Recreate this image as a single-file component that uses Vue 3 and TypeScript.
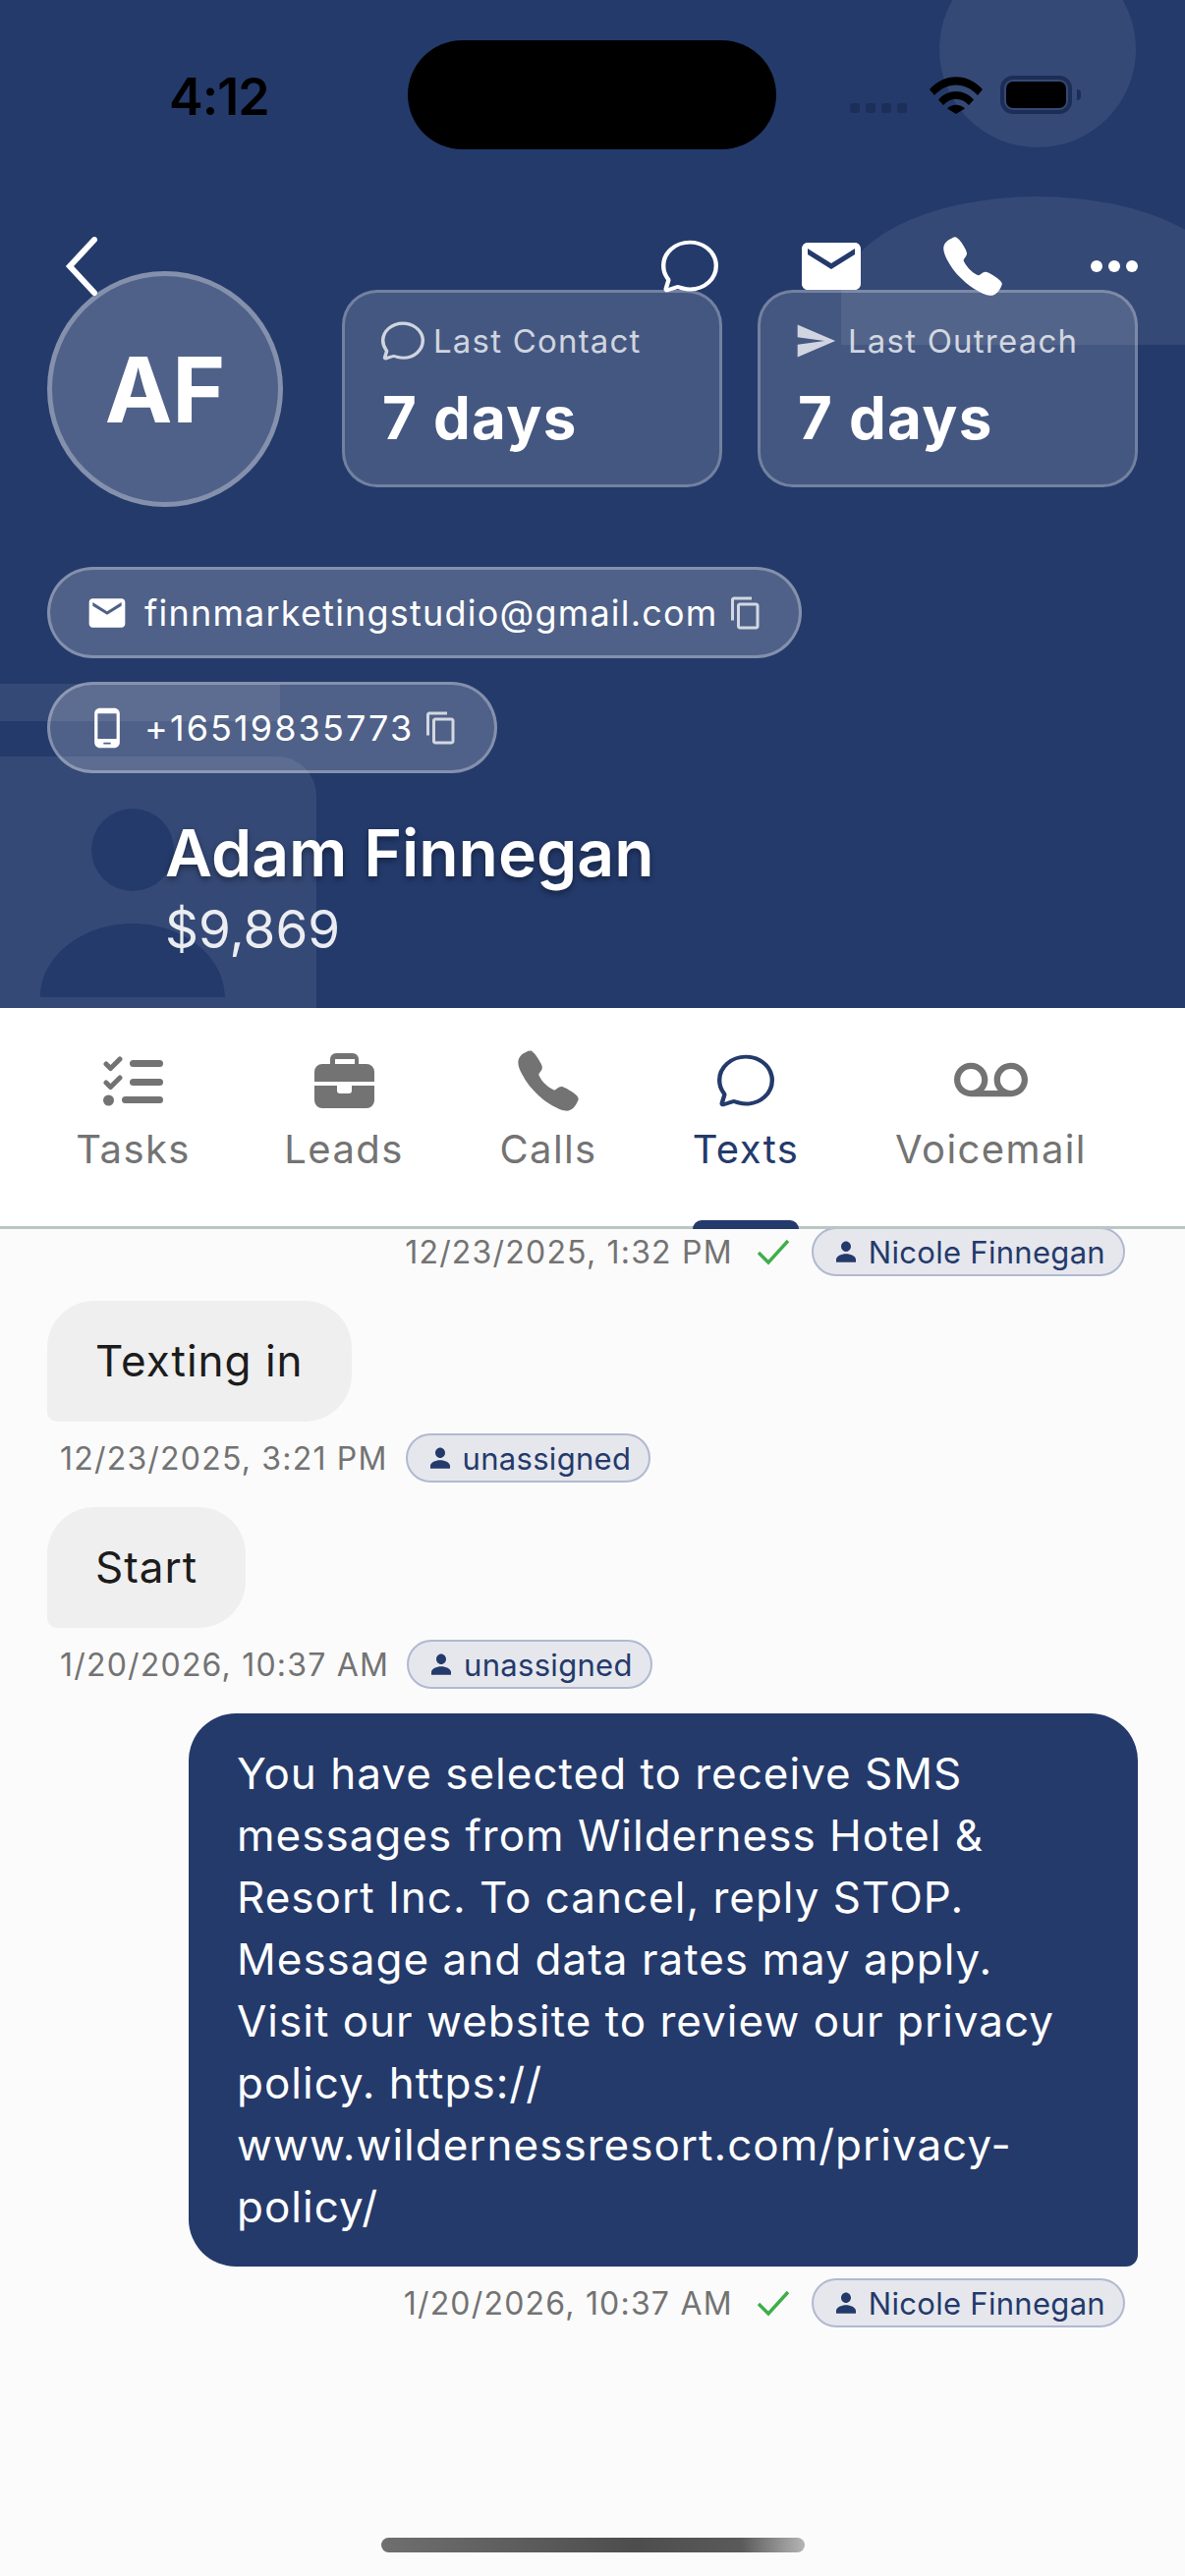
<script setup lang="ts">
const tabs = [
  { key: 'tasks', label: 'Tasks' },
  { key: 'leads', label: 'Leads' },
  { key: 'calls', label: 'Calls' },
  { key: 'texts', label: 'Texts' },
  { key: 'voicemail', label: 'Voicemail' },
]

const chatPath =
  'M87.48 380c1.2-4.38-1.43-10.47-3.94-14.86a42.63 42.63 0 00-2.54-3.8 199.81 199.81 0 01-33-110C47.64 139.09 140.72 48 255.82 48 356.2 48 440 117.54 459.57 209.85a199 199 0 014.43 41.64c0 112.41-89.49 204.93-204.59 204.93-18.31 0-43-4.6-56.47-8.37s-26.92-8.77-30.39-10.11a31.14 31.14 0 00-11.13-2.07 30.7 30.7 0 00-12.08 2.43L81.5 462.78a15.92 15.92 0 01-4.66 1.22 9.61 9.61 0 01-9.58-9.74 15.85 15.85 0 01.6-3.29z'
const callPath =
  'M391 480c-19.52 0-46.94-7.06-88-30-49.93-28-88.55-53.85-138.21-103.38C116.91 298.77 93.61 267.79 61 208.45c-36.84-67-30.56-102.12-23.54-117.13C45.82 73.38 58.16 62.65 74.11 52a176.3 176.3 0 0128.64-15.2c1-.43 1.93-.84 2.76-1.21 4.95-2.23 12.45-5.6 21.95-2 6.34 2.38 12 7.25 20.86 16 18.17 17.92 43 57.83 52.16 77.43 6.15 13.21 10.22 21.93 10.23 31.71 0 11.45-5.76 20.28-12.75 29.81-1.31 1.79-2.61 3.5-3.87 5.16-7.61 10-9.28 12.89-8.18 18.05 2.23 10.37 18.86 41.24 46.19 68.51s57.31 42.85 67.72 45.07c5.38 1.15 8.33-.59 18.65-8.47 1.48-1.13 3-2.3 4.59-3.47 10.66-7.93 19.08-13.54 30.26-13.54h.06c9.73 0 18.06 4.22 31.86 11.18 18 9.08 59.11 33.59 77.14 51.78 8.77 8.84 13.66 14.48 16.05 20.81 3.6 9.53.21 17-2 22-.37.83-.78 1.74-1.21 2.75a176.49 176.49 0 01-15.29 28.58c-10.63 15.9-21.4 28.21-39.38 36.58A67.42 67.42 0 01391 480z'
const mailPath =
  'M20 4H4c-1.1 0-1.99.9-1.99 2L2 18c0 1.1.9 2 2 2h16c1.1 0 2-.9 2-2V6c0-1.1-.9-2-2-2zm0 4l-8 5-8-5V6l8 5 8-5v2z'
const copyPath =
  'M16 1H4c-1.1 0-2 .9-2 2v14h2V3h12V1zm3 4H8c-1.1 0-2 .9-2 2v14c0 1.1.9 2 2 2h11c1.1 0 2-.9 2-2V7c0-1.1-.9-2-2-2zm0 16H8V7h11v14z'
const personPath =
  'M12 12c2.2 0 4-1.9 4-4.2S14.2 3.5 12 3.5 8 5.500 8 7.800 9.800 12 12 12zm0 1.800c-3.800 0-8 1.900-8 4.500V20.500h16v-2.200c0-2.600-4.200-4.500-8-4.500z'
</script>

<template>
  <div class="screen">
    <header class="hero">
      <!-- faded watermark shapes behind the header -->
      <svg class="watermark" width="1206" height="1026" viewBox="0 0 1206 1026">
        <g fill="#fff" fill-opacity="0.08">
          <circle cx="1056" cy="50" r="100" />
          <path d="M856 351V300A200 100 0 0 1 1256 300V351Z" />
          <path d="M0 696H285V734H0Z" />
          <path
            fill-rule="evenodd"
            d="M0 770H282a40 40 0 0 1 40 40V1026H0ZM135 823a42 42 0 1 0 0 84a42 42 0 1 0 0-84ZM135 940c-52 0-94 34-94 75v0H229v0c0-41-42-75-94-75Z"
          />
        </g>
      </svg>

      <div class="status-bar">
        <span class="clock">4:12</span>
        <div class="island"></div>
        <div class="status-icons">
          <div class="signal"><i></i><i></i><i></i><i></i></div>
          <svg class="wifi" width="54" height="38" viewBox="0 0 54 38">
            <path d="M0 13C15-4 39-4 54 13L49 19C36 5 18 5 5 19Z" fill="#000" />
            <path d="M9 23.500C19 12 35 12 45 23.500L40 29C32 20.500 22 20.500 14 29Z" fill="#000" />
            <path d="M18 32.500C23 27.500 31 27.500 36 32.500L27 38Z" fill="#000" />
          </svg>
          <div class="battery"><div class="battery-fill"></div></div>
          <div class="battery-cap"></div>
        </div>
      </div>

      <nav class="top-nav">
        <svg class="back" width="36" height="60" viewBox="0 0 36 60">
          <path d="M31 3 6 30 31 57" fill="none" stroke="#fff" stroke-width="6" stroke-linecap="round" />
        </svg>
        <div class="actions">
          <div class="action">
            <svg width="66" height="60" viewBox="0 0 512 512" preserveAspectRatio="none">
              <path :d="chatPath" fill="none" stroke="#fff" stroke-width="34" stroke-linecap="round" stroke-miterlimit="10" />
            </svg>
          </div>
          <div class="action">
            <svg width="72" height="72" viewBox="0 0 24 24"><path :d="mailPath" fill="#fff" /></svg>
          </div>
          <div class="action">
            <svg width="68" height="68" viewBox="0 0 512 512"><path :d="callPath" fill="#fff" /></svg>
          </div>
          <div class="action dots"><i></i><i></i><i></i></div>
        </div>
      </nav>

      <section class="summary">
        <div class="avatar">AF</div>
        <div class="stat-card">
          <div class="stat-label">
            <svg width="50" height="44" viewBox="0 0 512 512" preserveAspectRatio="none">
              <path :d="chatPath" fill="none" stroke="currentColor" stroke-width="36" stroke-linecap="round" />
            </svg>
            Last Contact
          </div>
          <div class="stat-value">7 days</div>
        </div>
        <div class="stat-card">
          <div class="stat-label send">
            <svg width="44" height="44" viewBox="0 0 24 24">
              <path d="M2.010 21 23 12 2.010 3 2 10l15 2-15 2z" fill="currentColor" />
            </svg>
            Last Outreach
          </div>
          <div class="stat-value">7 days</div>
        </div>
      </section>

      <div class="contact-pills">
        <div class="pill">
          <svg width="44" height="44" viewBox="0 0 24 24"><path :d="mailPath" fill="#fff" /></svg>
          <span>finnmarketingstudio@gmail.com</span>
          <svg class="copy" width="36" height="36" viewBox="0 0 24 24"><path :d="copyPath" fill="currentColor" /></svg>
        </div>
        <div class="pill phone">
          <svg width="44" height="44" viewBox="0 0 24 24">
            <path
              d="M16 1H8C6.340 1 5 2.340 5 4v16c0 1.660 1.340 3 3 3h8c1.660 0 3-1.340 3-3V4c0-1.660-1.340-3-3-3zm-2 20h-4v-1h4v1zm3.250-3H6.750V4h10.500v14z"
              fill="#fff"
            />
          </svg>
          <span>+16519835773</span>
          <svg class="copy" width="36" height="36" viewBox="0 0 24 24"><path :d="copyPath" fill="currentColor" /></svg>
        </div>
      </div>

      <div class="identity">
        <h1>Adam Finnegan</h1>
        <p>$9,869</p>
      </div>
    </header>

    <div class="tabs">
      <div
        v-for="tab in tabs"
        :key="tab.key"
        class="tab"
        :class="[`tab-${tab.key}`, { active: tab.key === 'texts' }]"
      >
        <div class="tab-icon">
          <svg v-if="tab.key === 'tasks'" width="61" height="51" viewBox="0 0 61 51">
            <g fill="none" stroke="currentColor" stroke-width="5" stroke-linecap="round" stroke-linejoin="round">
              <path d="M3 8 7.500 12.500 17 3" />
              <path d="M3 27 7.500 31.500 17 22" />
            </g>
            <circle cx="5.500" cy="45" r="5.500" fill="currentColor" />
            <rect x="27" y="4" width="34" height="7" rx="3.500" fill="currentColor" />
            <rect x="27" y="23" width="34" height="7" rx="3.500" fill="currentColor" />
            <rect x="19" y="41" width="42" height="7" rx="3.500" fill="currentColor" />
          </svg>
          <svg v-else-if="tab.key === 'leads'" width="61" height="56" viewBox="0 0 61 56">
            <path
              fill="currentColor"
              fill-rule="evenodd"
              d="M16 11V6a6 6 0 0 1 6-6h17a6 6 0 0 1 6 6v5h8a8 8 0 0 1 8 8v10H0V19a8 8 0 0 1 8-8ZM21 11h20V6H21Z"
            />
            <path fill="currentColor" d="M0 33H23V38a3 3 0 0 0 3 3h9a3 3 0 0 0 3-3V33H61V48a8 8 0 0 1-8 8H8a8 8 0 0 1-8-8Z" />
          </svg>
          <svg v-else-if="tab.key === 'calls'" width="70" height="70" viewBox="0 0 512 512">
            <path :d="callPath" fill="currentColor" />
          </svg>
          <svg v-else-if="tab.key === 'texts'" width="66" height="60" viewBox="0 0 512 512" preserveAspectRatio="none">
            <path :d="chatPath" fill="none" stroke="currentColor" stroke-width="34" stroke-linecap="round" />
          </svg>
          <svg v-else width="75" height="75" viewBox="0 0 24 24">
            <path
              fill="currentColor"
              d="M18.500 6C15.460 6 13 8.460 13 11.500c0 1.330.47 2.550 1.260 3.500H9.740c.79-.95 1.260-2.170 1.260-3.500C11 8.460 8.540 6 5.500 6S0 8.460 0 11.500 2.460 17 5.500 17h13c3.040 0 5.500-2.460 5.500-5.500S21.540 6 18.500 6zm-13 9C3.570 15 2 13.430 2 11.500S3.570 8 5.500 8 9 9.570 9 11.500 7.430 15 5.500 15zm13 0c-1.930 0-3.500-1.570-3.500-3.500S16.570 8 18.500 8 22 9.570 22 11.500 20.430 15 18.500 15z"
            />
          </svg>
        </div>
        <span class="tab-label">{{ tab.label }}</span>
        <div v-if="tab.key === 'texts'" class="tab-marker"></div>
      </div>
    </div>

    <main class="thread">
      <div class="meta meta-out first">
        <span class="stamp">12/23/2025, 1:32 PM</span>
        <svg class="tick" width="36" height="30" viewBox="0 0 36 30">
          <path d="M3 16 13 26 33 4" fill="none" stroke="#3fae49" stroke-width="3.400" />
        </svg>
        <span class="owner">
          <svg width="30" height="30" viewBox="0 0 24 24"><path :d="personPath" fill="currentColor" /></svg>
          Nicole Finnegan
        </span>
      </div>

      <div class="bubble incoming">Texting in</div>
      <div class="meta">
        <span class="stamp">12/23/2025, 3:21 PM</span>
        <span class="owner">
          <svg width="30" height="30" viewBox="0 0 24 24"><path :d="personPath" fill="currentColor" /></svg>
          unassigned
        </span>
      </div>

      <div class="bubble incoming">Start</div>
      <div class="meta">
        <span class="stamp">1/20/2026, 10:37 AM</span>
        <span class="owner">
          <svg width="30" height="30" viewBox="0 0 24 24"><path :d="personPath" fill="currentColor" /></svg>
          unassigned
        </span>
      </div>

      <div class="bubble outgoing">You have selected to receive SMS messages from Wilderness Hotel &amp; Resort Inc. To cancel, reply STOP. Message and data rates may apply. Visit our website to review our privacy policy. https://<br />www.wildernessresort.com/privacy-<br />policy/</div>
      <div class="meta meta-out">
        <span class="stamp">1/20/2026, 10:37 AM</span>
        <svg class="tick" width="36" height="30" viewBox="0 0 36 30">
          <path d="M3 16 13 26 33 4" fill="none" stroke="#3fae49" stroke-width="3.400" />
        </svg>
        <span class="owner">
          <svg width="30" height="30" viewBox="0 0 24 24"><path :d="personPath" fill="currentColor" /></svg>
          Nicole Finnegan
        </span>
      </div>
    </main>

    <div class="home-bar"></div>
  </div>
</template>

<style>
html,
body {
  margin: 0;
  background: #fbfbfb;
}
</style>

<style scoped>
.screen {
  position: relative;
  width: 1206px;
  height: 2622px;
  overflow: hidden;
  display: flex;
  flex-direction: column;
  background: #fbfbfb;
  font-family: Inter, 'Noto Sans', sans-serif;
}

.hero {
  position: relative;
  height: 1026px;
  box-sizing: border-box;
  flex: none;
  background: #243a6b;
  color: #fff;
  overflow: hidden;
}

.watermark {
  position: absolute;
  left: 0;
  top: 0;
}

.status-bar {
  position: relative;
  display: flex;
  align-items: center;
  height: 111px;
  margin-top: 41px;
}

.clock {
  width: 172px;
  margin-left: 172px;
  margin-right: 71px;
  padding-top: 5px;
  font-size: 52px;
  font-weight: 600;
  color: #000;
  letter-spacing: -1px;
  line-height: 1;
}

.island {
  width: 375px;
  height: 111px;
  border-radius: 56px;
  background: #000;
}

.status-icons {
  display: flex;
  align-items: center;
  margin-left: 75px;
}

.signal {
  display: flex;
  gap: 6px;
  margin-top: 27px;
}

.signal i {
  width: 10px;
  height: 10px;
  border-radius: 3px;
  background: #1c2f59;
}

.wifi {
  margin-left: 23px;
}

.battery {
  width: 73px;
  height: 39px;
  box-sizing: border-box;
  border: 4px solid #1d2e56;
  border-radius: 13px;
  padding: 2px;
  margin-left: 18px;
}

.battery-fill {
  height: 100%;
  background: #000;
  border-radius: 7px;
}

.battery-cap {
  width: 4px;
  height: 11px;
  margin-left: 5px;
  border-radius: 0 4px 4px 0;
  background: #1d2e56;
}

.top-nav {
  position: relative;
  display: flex;
  align-items: center;
  justify-content: space-between;
  height: 68px;
  margin-top: 85px;
  padding: 0 36px 0 65px;
}

.actions {
  display: flex;
  align-items: center;
  gap: 72px;
}

.action {
  width: 72px;
  height: 72px;
  display: flex;
  align-items: center;
  justify-content: center;
}

.dots {
  gap: 6px;
}

.dots i {
  width: 12px;
  height: 12px;
  border-radius: 50%;
  background: #fff;
}

.summary {
  position: relative;
  display: flex;
  align-items: flex-start;
  gap: 36px;
  padding: 0 48px;
  height: 240px;
  margin-top: -32px;
}

.avatar {
  width: 240px;
  height: 240px;
  margin-right: 24px;
  margin-top: 3px;
  box-sizing: border-box;
  flex: none;
  display: flex;
  align-items: center;
  justify-content: center;
  border-radius: 50%;
  border: 5px solid rgba(255, 255, 255, 0.3);
  background: rgba(255, 255, 255, 0.2);
  font-size: 92px;
  font-weight: 700;
}

.stat-card {
  width: 387px;
  height: 201px;
  margin-top: 22px;
  box-sizing: border-box;
  padding: 27px 0 0 38px;
  border: 3px solid rgba(255, 255, 255, 0.25);
  border-radius: 36px;
  background: rgba(255, 255, 255, 0.15);
}

.stat-label {
  display: flex;
  align-items: center;
  gap: 6px;
  font-size: 33px;
  letter-spacing: 1.2px;
  color: rgba(255, 255, 255, 0.75);
}

.stat-label svg {
  margin-left: -4px;
}

.stat-label.send {
  gap: 11px;
}

.stat-value {
  margin-top: 20px;
  font-size: 60px;
  font-weight: 700;
  letter-spacing: 1.4px;
}

.contact-pills {
  position: relative;
  display: flex;
  flex-direction: column;
  align-items: flex-start;
  gap: 24px;
  margin-top: 64px;
  padding-left: 48px;
}

.pill {
  display: flex;
  align-items: center;
  gap: 16px;
  height: 93px;
  box-sizing: border-box;
  padding: 0 36px 0 36px;
  border: 3px solid rgba(255, 255, 255, 0.3);
  border-radius: 47px;
  background: rgba(255, 255, 255, 0.2);
  font-size: 36px;
  letter-spacing: 1.2px;
}

.pill.phone {
  letter-spacing: 2.1px;
}

.copy {
  margin-left: -6px;
  color: rgba(255, 255, 255, 0.75);
}

.identity {
  position: relative;
  margin-top: 41px;
  padding-left: 168px;
}

.identity h1 {
  margin: 0;
  font-size: 66px;
  line-height: 80px;
  font-weight: 600;
  text-shadow: 0 3px 6px rgba(0, 0, 0, 0.4);
}

.identity p {
  margin: 6px 0 0;
  font-size: 53px;
  line-height: 64px;
  color: rgba(255, 255, 255, 0.9);
}

.tabs {
  position: relative;
  flex: none;
  height: 225px;
  box-sizing: border-box;
  border-bottom: 3px solid #bac6c2;
  background: #fff;
}

.tab {
  position: absolute;
  top: 0;
  display: flex;
  flex-direction: column;
  align-items: center;
  color: #737373;
}

.tab.active {
  color: #243a6b;
}

.tab-tasks {
  left: 79px;
  width: 113px;
}

.tab-leads {
  left: 290px;
  width: 120px;
}

.tab-calls {
  left: 509px;
  width: 98px;
}

.tab-texts {
  left: 705px;
  width: 108px;
}

.tab-voicemail {
  left: 911px;
  width: 195px;
}

.tab-icon {
  height: 92px;
  display: flex;
  align-items: center;
  justify-content: center;
  margin-top: 28px;
  white-space: nowrap;
}

.tab-label {
  font-size: 40px;
  line-height: 48px;
  letter-spacing: 1.4px;
  white-space: nowrap;
}

.tab-marker {
  position: absolute;
  top: 216px;
  left: 0;
  width: 108px;
  height: 9px;
  background: #243a6b;
  border-radius: 9px 9px 0 0;
}

.thread {
  display: flex;
  flex-direction: column;
  align-items: flex-start;
  padding: 0 48px;
}

.meta {
  display: flex;
  align-items: center;
  gap: 18px;
  margin: 12px 0 25px;
  padding-left: 13px;
}

.meta-out {
  align-self: flex-end;
  gap: 24px;
  padding-left: 0;
  padding-right: 13px;
}

.meta.first {
  margin-top: -2px;
}

.stamp {
  font-size: 32px;
  letter-spacing: 1.2px;
  color: #737373;
}

.tick {
  margin: 0 -3px 0 -1px;
}

.owner {
  display: flex;
  align-items: center;
  gap: 8px;
  height: 50px;
  box-sizing: border-box;
  padding: 0 18px;
  border: 2px solid #b0b9d0;
  border-radius: 25px;
  background: #e6e7ed;
  font-size: 31px;
  letter-spacing: 0.3px;
  color: #243a6b;
}

.bubble {
  font-size: 44px;
  line-height: 63px;
  letter-spacing: 1px;
}

.incoming {
  box-sizing: border-box;
  height: 123px;
  padding: 30px 49px;
  border-radius: 48px 48px 48px 10px;
  background: #efefef;
  color: #1c1c1c;
}

.outgoing {
  align-self: flex-end;
  box-sizing: border-box;
  width: 966px;
  height: 563px;
  padding: 30px 49px;
  border-radius: 48px 48px 12px 48px;
  background: #243a6b;
  color: #fff;
}

.home-bar {
  position: absolute;
  left: 388px;
  top: 2583px;
  width: 431px;
  height: 15px;
  border-radius: 8px;
  background: linear-gradient(90deg, #6f6f6f 0%, #4d4d4d 60%, #5a5a5a 85%, #b5b5b5 100%);
}
</style>
